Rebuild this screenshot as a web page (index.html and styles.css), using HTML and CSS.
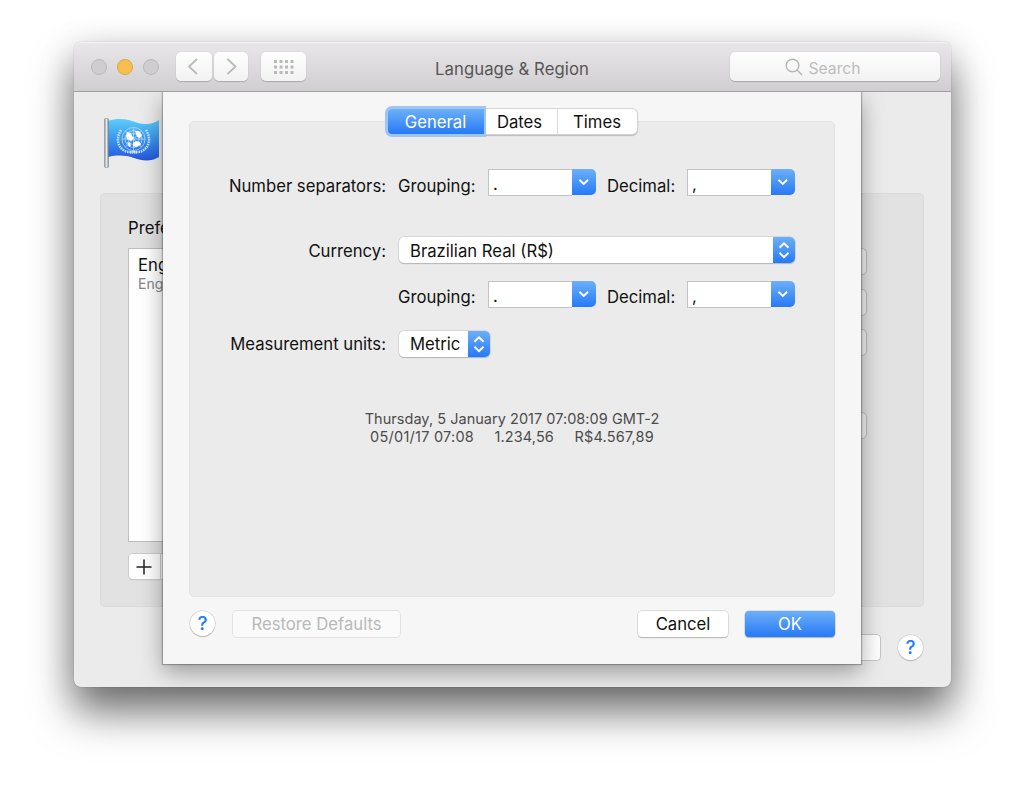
FILE: index.html
```html
<!DOCTYPE html>
<html lang="en">
<head>
<meta charset="utf-8">
<title>Language &amp; Region</title>
<link rel="stylesheet" href="styles.css">
</head>
<body>
<svg class="defs" width="0" height="0">
  <defs>
    <symbol id="down" viewBox="0 0 24 27"><path d="M7.500 11.200l4.500 4.300 4.500-4.300"/></symbol>
    <symbol id="updown" viewBox="0 0 22 27"><path d="M6.300 11.200l4.700-4.700 4.700 4.700M6.300 16.300l4.700 4.700 4.700-4.700"/></symbol>
  </defs>
</svg>
<main class="window">
  <header class="titlebar">
    <div class="lights"><i></i><i class="amber"></i><i></i></div>
    <div class="nav">
      <button class="tool"><svg width="34" height="29" viewBox="0 0 34 29"><path d="M20 7l-8 7.500 8 7.500"/></svg></button>
      <button class="tool"><svg width="34" height="29" viewBox="0 0 34 29"><path d="M13.500 7l8 7.500-8 7.500"/></svg></button>
    </div>
    <button class="tool all"><svg width="45" height="29" viewBox="0 0 45 29"><path class="dots" d="M13 9.500h20M13 15h20M13 20.500h20"/></svg></button>
    <h1><span class="t">Language &amp; Region</span></h1>
    <div class="search"><svg width="18" height="18" viewBox="0 0 18 18"><circle cx="7.500" cy="7.500" r="6.300"/><path d="M12 12l5 5"/></svg><span class="t">Search</span></div>
  </header>
  <section class="pane">
    <svg class="flag" width="60" height="54" viewBox="0 0 60 54">
      <defs>
        <linearGradient id="fl" x1="0" y1="0" x2="0" y2="1"><stop offset="0" stop-color="#5bcdfa"/><stop offset=".5" stop-color="#3a94ee"/><stop offset="1" stop-color="#2455dd"/></linearGradient>
        <linearGradient id="pole"><stop offset="0" stop-color="#8b949b"/><stop offset=".5" stop-color="#e4e9ec"/><stop offset="1" stop-color="#7f888f"/></linearGradient>
      </defs>
      <path fill="url(#fl)" d="M6 4C18 0 28 3 36 6c8 2 15 1 21-3v37c-8 5-17 4-25 1-9-3-17-3-26-1z"/>
      <rect x="2.500" y="1.500" width="4" height="49" rx="1" fill="url(#pole)" stroke="#7d858b" stroke-width=".5"/>
      <g fill="none" stroke="#c4e2ff" stroke-width=".7">
        <circle cx="31.500" cy="22" r="11.500"/><circle cx="31.500" cy="22" r="8.500"/><circle cx="31.500" cy="22" r="5.500"/>
        <path d="M20 22h23M31.500 10.500v23M23.500 14l16 16M39.500 14l-16 16"/>
        <path stroke-width="2.500" stroke-dasharray="1.600 .8" d="M19 13c-5 8-4 17 4 21 3 2 7 0 12 2M44 13c5 8 4 17-4 21-3 2-7 0-12 2"/>
      </g>
      <path fill="#fff" d="M24 19l1-4 4 1 1 3 2 2-3 3-4-2zM33 14l4 0 3 4-2 3-3-1-1-3zM31 26l3-2 4 1 1 3-5 2-3-1zM25 25l3 1 1 3-2 1z"/>
    </svg>
    <div class="group">
      <div class="langs">
        <div class="cap"><span class="t">Preferred languages:</span></div>
        <div class="list"><b><span class="t">English</span></b><small><span class="t">English</span></small></div>
        <div class="pm"><span><svg width="16" height="16" viewBox="0 0 16 16"><path d="M8 .5v15M.5 8h15"/></svg></span><span></span></div>
      </div>
      <div class="pops"><i></i><i></i><i></i><i></i></div>
    </div>
    <footer class="back-foot"><i class="under"></i><button class="help"><span class="t">?</span></button></footer>
  </section>
  <section class="sheet">
    <div class="panel">
      <nav class="tabs"><a class="on"><span class="t">General</span></a><a><span class="t">Dates</span></a><a><span class="t">Times</span></a></nav>
      <div class="form">
        <div class="row r1"><label class="l"><span class="t">Number separators:</span></label><label class="g"><span class="t">Grouping:</span></label><div class="combo"><span>.</span><svg><use href="#down"/></svg></div><label class="d"><span class="t">Decimal:</span></label><div class="combo"><span>,</span><svg><use href="#down"/></svg></div></div>
        <div class="row r2"><label class="l"><span class="t">Currency:</span></label><div class="popup wide"><span class="t">Brazilian Real (R$)</span><svg><use href="#updown"/></svg></div></div>
        <div class="row r3"><label class="l"></label><label class="g"><span class="t">Grouping:</span></label><div class="combo"><span>.</span><svg><use href="#down"/></svg></div><label class="d"><span class="t">Decimal:</span></label><div class="combo"><span>,</span><svg><use href="#down"/></svg></div></div>
        <div class="row r4"><label class="l"><span class="t">Measurement units:</span></label><div class="popup unit"><span class="t">Metric</span><svg><use href="#updown"/></svg></div></div>
      </div>
      <div class="sample"><p><span class="t">Thursday, 5 January 2017 07:08:09 GMT-2</span></p><p class="three"><span class="t">05/01/17 07:08</span><span class="t">1.234,56</span><span class="t">R$4.567,89</span></p></div>
    </div>
    <footer class="actions"><button class="help"><span class="t">?</span></button><button class="btn restore"><span class="t">Restore Defaults</span></button><button class="btn cancel"><span class="t">Cancel</span></button><button class="btn ok"><span class="t">OK</span></button></footer>
  </section>
</main>
</body>
</html>
```
FILE: styles.css
```css
* { box-sizing: border-box; }
body { margin: 0; background: #fff; font: 16.7px/27px Inter, "Liberation Sans", sans-serif; color: #111; width: 1024px; height: 792px; overflow: hidden; padding: 42px 0 0 74px; }
button { font: inherit; padding: 0; border: 0; }
h1, p { margin: 0; font: inherit; }
.defs { position: absolute; }
.t { white-space: nowrap; }
.window { position: relative; width: 876.5px; height: 645px; border-radius: 7px; background: #ebebeb; box-shadow: 0 0 1px rgba(0,0,0,.45), 0 26px 42px rgba(0,0,0,.5), 0 8px 36px rgba(0,0,0,.18); }
.titlebar { display: flex; align-items: center; height: 50px; padding: 0 10.500px 0 17px; border-radius: 7px 7px 0 0; background: linear-gradient(#e9e7e9, #d0ced0); border-bottom: 1px solid #a09ea0; box-shadow: inset 0 1px #f6f5f6; }
.lights { display: flex; gap: 10px; width: 85px; }
.lights i { width: 16px; height: 16px; border-radius: 50%; background: #cfcdcf; border: 1px solid #b9b7b9; }
.lights .amber { background: #f7bf4f; border-color: #dda63c; }
.nav { display: flex; gap: 2px; margin-right: 13px; }
.tool, .search { height: 29px; border-radius: 5px; background: linear-gradient(#fefefe, #f2f2f2); box-shadow: 0 1px 1px #aaa8aa, 0 0 1px #bbb; display: flex; align-items: center; justify-content: center; }
.tool { width: 35px; }
.nav .tool:first-child { width: 36px; }
.nav .tool:last-child { width: 34px; }
.tool.all { width: 45px; }
.tool path { fill: none; stroke: #b9b9b9; stroke-width: 1.8; }
.tool .dots { stroke-width: 3; stroke-dasharray: 3 2.500; }
h1 { flex: 1; padding: 5px 0 0 129px; color: #555; letter-spacing: .08px; }
.search { width: 210px; padding: 1px 24px 0 0; gap: 5px; color: #bdbdbd; font-size: 15.700px; }
.search .t { padding-top: 2px; }
.search svg { fill: none; stroke: #b5b5b5; stroke-width: 1.400; }
.pane { padding: 25px 26.500px 0 26px; }
.flag { display: block; margin-left: 2px; }
.group { display: flex; justify-content: space-between; height: 414px; margin-top: 22px; background: #e2e2e2; border: 1px solid #dadada; border-radius: 5px; padding: 20px 56px 0 27px; }
.langs { width: 260px; }
.cap { padding-top: 1px; height: 27px; }
.list { height: 294px; margin-top: 7px; padding: 3px 9px; background: #fff; border: 1px solid #bebebe; display: flex; flex-direction: column; }
.list b { font-weight: 400; height: 21px; }
.list small { font-size: 14px; line-height: 21px; color: #858585; }
.pm { display: flex; width: 64px; height: 25px; margin: 12px 0 0 1px; background: #fff; border-radius: 4px; box-shadow: 0 0 0 1px #ccc, 0 1px 1px #999; }
.pm span { display: flex; align-items: center; justify-content: center; width: 32px; padding-right: 1px; border-right: 1px solid #ccc; }
.pm path { stroke: #222; stroke-width: 1.500; }
.pops { padding-top: 34px; }
.pops i { display: block; width: 200px; height: 27px; margin-bottom: 13.500px; border: 1px solid #bdbdbd; border-radius: 5px; background: #f0f0f0; }
.pops i:nth-child(3) { margin-bottom: 55.500px; }
.back-foot { display: flex; justify-content: flex-end; align-items: center; gap: 17px; margin-top: 27px; }
.under { width: 100px; height: 27px; border-radius: 4px; background: #fff; border: 1px solid #c6c6c6; }
.help { width: 25px; height: 25px; border-radius: 50%; background: #fff; color: #217cf8; font-size: 19px; line-height: 26px; font-weight: 500; box-shadow: 0 0 0 .5px #c4c4c4, 0 1px 1px #aaa; }
.sheet { position: absolute; left: 89px; top: 50px; width: 698px; height: 571.500px; padding: 29px 26px 0 26px; background: #f6f6f6; box-shadow: 0 0 1px 1px rgba(0,0,0,.25), 0 8px 22px rgba(0,0,0,.35); clip-path: inset(0 -50px -50px -50px); }
.pane .help { margin-right: 1px; }
.panel { height: 476px; background: #ebebeb; border: 1px solid #e3e3e3; border-radius: 5px; }
.tabs { display: flex; width: 248.500px; height: 25px; margin: -13px 0 0 198px; background: #fff; border-radius: 5px; box-shadow: 0 0 0 1px #d5d5d5, 0 1px 1px 1px #bbb; line-height: 26px; text-align: center; }
.tabs a { width: 78px; }
.tabs a:nth-child(2) { width: 74px; border-right: 1px solid #ddd; padding-right: 2px; }
.tabs .on { width: 96px; padding-right: 1px; color: #fff; background: linear-gradient(#6cb0f7, #2779f8); border-radius: 4px 0 0 4px; box-shadow: 0 0 0 3px #9fc5f3; clip-path: inset(-4px -2px -4px -4px); }
.form { padding-top: 35px; }
.row { display: flex; height: 27px; }
.l { width: 196px; text-align: right; margin-right: 12px; }
.g { width: 90px; }
.d { width: 91px; padding-left: 11px; }
.r1 label, .r3 label { padding-top: 3px; }
.r1 label { padding-top: 4px; }
.r2 label, .r2 .t { padding-top: 1px; }
.r2 { margin-top: 41px; }
.r3 { margin-top: 17px; }
.r4 { margin-top: 23px; }
.combo { display: flex; justify-content: space-between; width: 107.500px; height: 27px; margin-right: .5px; }
.combo span { flex: 1; border: 1px solid #c3c3c3; border-right: 0; background: #fff; padding: 2px 0 0 4px; line-height: 25px; }
.combo svg { width: 23.500px; height: 26px; border-radius: 0 5px 5px 0; }
.row svg { fill: none; stroke: #fff; stroke-width: 2; background: linear-gradient(#6cb0f7, #2779f8); }
.popup { display: flex; justify-content: space-between; height: 26px; margin-left: 1px; padding-left: 11px; background: #fff; border-radius: 5px; box-shadow: 0 0 0 .5px #c4c4c4, 0 1px 1px #aaa; }
.popup svg { width: 22px; height: 26px; border-radius: 0 5px 5px 0; }
.wide { width: 396px; }
.unit { width: 91px; }
.sample { margin-top: 52px; text-align: center; font-size: 14.500px; line-height: 18px; letter-spacing: .03px; color: #4c4c4c; }
.three { display: flex; justify-content: center; gap: 20.500px; }
.three .t:first-child { letter-spacing: .25px; }
.three .t:nth-child(2) { letter-spacing: .1px; }
.three .t:last-child { letter-spacing: .2px; }
.actions { display: flex; align-items: center; margin-top: 13px; padding-left: 1px; height: 27px; }
.btn { height: 26px; line-height: 26px; border-radius: 4px; background: #fff; box-shadow: 0 0 0 .5px #c4c4c4, 0 1px 1px #aaa; width: 90px; color: #111; }
.restore { width: 167px; margin: 0 auto 0 18px; color: #b9b9b9; background: #fafafa; box-shadow: 0 0 0 1px #e2e2e2; }
.ok { margin-left: 17px; color: #fff; background: linear-gradient(#6cb0f7, #2779f8); }
```
